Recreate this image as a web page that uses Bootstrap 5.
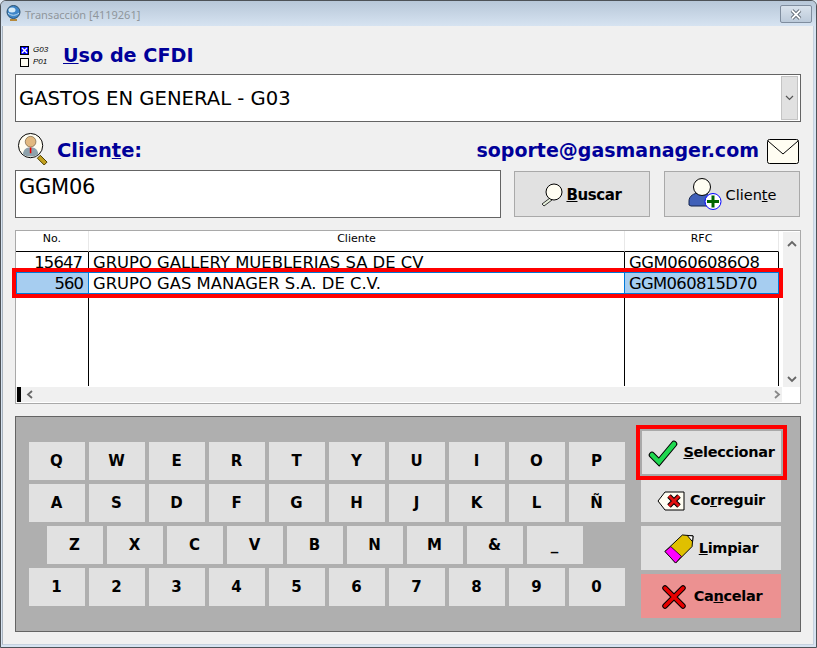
<!DOCTYPE html>
<html lang="es"><head><meta charset="utf-8"><title>Transacción</title>
<link href="https://cdn.jsdelivr.net/npm/bootstrap@5.3.0/dist/css/bootstrap.min.css" rel="stylesheet">
<style>
html,body{margin:0;height:648px;background:#dfe8f2;overflow:hidden}
body{font-family:"DejaVu Sans",sans-serif;color:#000}
.wnd{width:817px;height:648px;border:1px solid #4d5257;border-radius:6px 6px 0 0;background:#d6e3f1;display:flex;flex-direction:column;overflow:hidden}
.ttl{height:25px;flex:none;background:linear-gradient(#b7c7d8,#d6e3f1);padding-left:5px;color:#8f969c;font:11px/27px "Noto Sans",sans-serif}
.closex{width:32px;height:18px;margin:4px 4px 0 0;border:1px solid #7f8d9e;border-radius:2px;background:linear-gradient(#d9e2ec,#bccada)}
.bodyw{flex:1;margin:0 2px 2px 1px;background:#f0f0f0;padding:0 12px;border-left:1px solid #aab4bf;border-right:1px solid #c6d2df;border-bottom:1px solid #c6d2df}
.cfdirow{height:33px;margin-top:15px;align-items:flex-start}
.cfditop{width:43px;margin:3px 0 0 5px;font:italic 8px/12px "Liberation Sans",sans-serif}
.bluehd{font-weight:700;color:#000099;font-size:19px;line-height:24px}
.cfdihd{font-size:19.2px;margin-top:3px}
.clihd{font-size:19.5px;margin-bottom:2px}
.suphd{margin-bottom:3px}
.combo{height:48px;border:1px solid #646464;background:#fff;font-size:19.6px;padding:2px 2px 0 3px}
.combobtn{width:17px;height:44px;margin-top:-2px;background:#e1e1e1;border:1px solid #c4c4c4}
.clirow{height:48px;align-items:flex-end;padding-bottom:5px}
.cicon{margin:0 7px 0 2px}
.envi{margin-right:1px;margin-left:8px}
.inp{width:486px;height:48px;flex:none;border:1px solid #646464;border-radius:0;padding:0 3px 14px;font-size:21px;letter-spacing:-.25px;line-height:28px;color:#000;box-shadow:none}
.topbtn{width:136px;height:46px;margin-top:1px;background:#e1e1e1;border:1px solid #a9a9a9;border-radius:0;color:#000;font-size:14.5px;padding:0}
.bsc{margin-left:13px;font-size:15px;letter-spacing:-.4px;padding-right:3px}
.cli2{margin-left:14px}
.tlab{padding-top:3px}
.gridw{position:relative;margin-top:12px;height:174px;border:1px solid #a9a9a9;background:#fff}
.gridl{width:766px}
.gridtbl{width:763px;height:155px;table-layout:fixed;border-collapse:separate;border-spacing:0;margin:0;background:#fff}
.gridtbl>thead>tr>th{height:21px;padding:0;font:400 11px/15px "DejaVu Sans",sans-serif;vertical-align:top;text-align:center;border-bottom:1px solid #000;border-right:1px solid #e8e8e8;box-shadow:none;background:#fff;color:#000}
.gridtbl>tbody>tr>td{padding:2px 4px 0;font-size:16.4px;line-height:18px;border:0;border-right:1px solid #000;box-shadow:none;background:#fff;color:#000;white-space:nowrap;overflow:hidden;vertical-align:top}
.gridtbl>tbody>tr.r1>td{height:20px}
.gridtbl>tbody>tr.r2>td{height:22px;border-top:1px solid #0078d7;border-bottom:1px solid #0078d7;border-right-color:#0078d7}
.gridtbl>tbody>tr.r2>td.sel{background:#a6cdf0}
.gridtbl>tbody>tr.r2>td.first{border-left:1px solid #0078d7}
.gridtbl>tbody>tr>td.numc{text-align:right;padding-right:6px;letter-spacing:-.9px}
.gridtbl>tbody>tr.r2>td.numc{padding-right:5px}
.gridtbl>tbody>tr>td.rfcc{letter-spacing:-.45px}
.gridtbl>tbody>tr.r2>td.rfcc{letter-spacing:-.65px}
.hscroll{height:15px;margin-top:1px;background:#f0f0f0;padding-left:1px}
.hmark{width:4px;height:15px;background:#000}
.vscroll{width:17px;height:155px;margin:1px 0 0 1px;background:#f0f0f0}
.redband{position:absolute;left:-4px;top:37px;width:771px;height:30px;border:4px solid #f00;pointer-events:none}
.panel{margin-top:12px;height:216px;border:1px solid #646464;background:#afafaf;padding:12px 0 0 13px}
.keysw{margin-top:13px;gap:4px;width:597px}
.keyrow{gap:4px}
.keyrow.ind{padding-left:18px}
.kk{width:56px;height:38px;padding:0 1px 0 0;border:0;border-radius:0;background:#e1e1e1;color:#000;font-weight:700;font-size:15px;line-height:38px}
.acts{width:143px;margin-left:15px;gap:4px}
.act{height:44px;width:140px;padding:0;border:0;border-radius:0;background:#e1e1e1;color:#000;font-weight:700;font-size:14.5px;letter-spacing:-.3px;gap:5px}
.act:hover,.kk:hover,.topbtn:hover{background:#e1e1e1;color:#000}
.act.selb{width:143px;height:47px;margin-left:-1px;border:2px solid #a9a9a9;outline:4px solid #f00}
.act.corb{height:42px}
.act.limb{padding-top:1px}
.act.canb,.act.canb:hover{background:#ec9191;gap:8px;padding:1px 0 0 2px}
</style></head><body>
<div class="wnd">
 <div class="ttl d-flex align-items-start">
  <svg width="15" height="17" viewBox="0 0 15 17" class="me-1 mt-1 flex-none"><ellipse cx="7.5" cy="7" rx="6.5" ry="6.5" fill="#3f86c8" stroke="#29516f"/><ellipse cx="6" cy="5" rx="3.5" ry="2.5" fill="#d5ebf8"/><path d="M2 8c3 3 8 3 11 0" fill="none" stroke="#bfe0f5"/><path d="M4 15h7" stroke="#b68a3c" stroke-width="2"/></svg>
  <span class="flex-grow-1">Transacción [4119261]</span>
  <div class="closex d-flex align-items-center justify-content-center"><svg width="14" height="11" viewBox="0 0 14 11"><path d="M3 1.5l8 8M11 1.5l-8 8" stroke="#4c5560" stroke-width="3.6"/><path d="M3 1.5l8 8M11 1.5l-8 8" stroke="#fff" stroke-width="1.8"/></svg></div>
 </div>
 <div class="bodyw">
  <div class="cfdirow d-flex">
   <div class="cfditop">
    <div class="d-flex align-items-center gap-1"><svg width="9" height="9" viewBox="0 0 9 9"><rect x=".5" y=".5" width="8" height="8" fill="#00f" stroke="#000"/><path d="M2 2l5 5M7 2l-5 5" stroke="#fff" stroke-width="1.4"/></svg><span>G03</span></div>
    <div class="d-flex align-items-center gap-1"><svg width="9" height="9" viewBox="0 0 9 9"><rect x=".5" y=".5" width="8" height="8" fill="#fffdf2" stroke="#000"/></svg><span>P01</span></div>
   </div>
   <div class="bluehd cfdihd"><u>U</u>so de CFDI</div>
  </div>
  <div class="combo d-flex align-items-center"><span class="flex-grow-1">GASTOS EN GENERAL - G03</span>
   <div class="combobtn d-flex align-items-center justify-content-center"><svg width="9" height="6" viewBox="0 0 9 6"><path d="M1 1l3.5 3.5L8 1" fill="none" stroke="#555" stroke-width="1.2"/></svg></div></div>
  <div class="clirow d-flex">
   <svg width="33" height="33" viewBox="0 0 34 34" class="cicon"><path d="M24 24l7 7-3 3-7-7z" fill="#c2a01e" stroke="#4a3c00"/><circle cx="14" cy="14" r="12.5" fill="#fffdf2" stroke="#000"/><path d="M6 23c1-6 4-7 8-7s7 1 8 7c-4 3-12 3-16 0z" fill="#8ea2ac"/><circle cx="14" cy="10" r="5.5" fill="#e2b980" stroke="#5c4a2e" stroke-width=".6"/><path d="M14 16v6" stroke="#e00" stroke-width="1.6"/></svg>
   <div class="bluehd clihd flex-grow-1">Clien<u>t</u>e:</div>
   <div class="bluehd suphd">soporte@gasmanager.com</div>
   <svg width="33" height="26" viewBox="0 0 33 26" class="envi"><rect x=".5" y=".5" width="31" height="24" rx="2" fill="#fffdf2" stroke="#000"/><path d="M1 2l15 13L31 2" fill="none" stroke="#000"/></svg>
  </div>
  <div class="d-flex">
   <input class="form-control inp" value="GGM06">
   <button class="btn topbtn bsc d-flex align-items-center justify-content-center fw-bold">
    <svg width="27" height="26" viewBox="0 -2 27 26"><path d="M11 15L3 21l2 2 8-6z" fill="#e6f0dc" stroke="#333"/><circle cx="15" cy="9" r="8" fill="#fffdf2" stroke="#000"/></svg><span class="tlab"><u>B</u>uscar</span></button>
   <button class="btn topbtn cli2 d-flex align-items-center justify-content-center gap-1">
    <svg width="34" height="32" viewBox="0 0 34 32"><path d="M1 27v-4c0-5 5-8 10-8h4c5 0 7 3 7 8v5H3z" fill="#4060b8" stroke="#14244e"/><circle cx="14" cy="9" r="8.5" fill="#fffdf2" stroke="#000"/><circle cx="25" cy="23.500" r="8" fill="#fff" stroke="#00f"/><path d="M25 17.500v12M19 23.500h12" stroke="#006400" stroke-width="3"/></svg><span class="tlab">Clien<u>t</u>e</span></button>
  </div>
  <div class="gridw d-flex">
   <div class="gridl">
    <table class="table gridtbl">
     <colgroup><col style="width:73px"><col style="width:536px"><col style="width:154px"></colgroup>
     <thead><tr><th>No.</th><th>Cliente</th><th>RFC</th></tr></thead>
     <tbody>
      <tr class="r1"><td class="numc">15647</td><td>GRUPO GALLERY MUEBLERIAS SA DE CV</td><td class="rfcc">GGM0606086O8</td></tr>
      <tr class="r2"><td class="numc sel first">560</td><td>GRUPO GAS MANAGER S.A. DE C.V.</td><td class="sel rfcc">GGM060815D70</td></tr>
      <tr><td></td><td></td><td></td></tr>
     </tbody>
    </table>
    <div class="hscroll d-flex align-items-center"><div class="hmark"></div>
     <svg width="10" height="9" viewBox="0 0 10 9" class="ms-1 flex-none"><path d="M7 1L3 4.500l4 3.500" fill="none" stroke="#666" stroke-width="1.800"/></svg>
     <svg width="10" height="9" viewBox="0 0 10 9" class="ms-auto"><path d="M3 1l4 3.500L3 8" fill="none" stroke="#888" stroke-width="1.800"/></svg></div>
   </div>
   <div class="vscroll d-flex flex-column align-items-center justify-content-between pt-2 pb-1">
    <svg width="10" height="7" viewBox="0 0 10 7"><path d="M1 6l4-4 4 4" fill="none" stroke="#666" stroke-width="1.800"/></svg>
    <svg width="10" height="7" viewBox="0 0 10 7"><path d="M1 1l4 4 4-4" fill="none" stroke="#666" stroke-width="1.800"/></svg>
   </div>
   <div class="redband"></div>
  </div>
  <div class="panel d-flex">
   <div class="keysw d-flex flex-column">
    <div class="keyrow d-flex"><button class="btn kk">Q</button><button class="btn kk">W</button><button class="btn kk">E</button><button class="btn kk">R</button><button class="btn kk">T</button><button class="btn kk">Y</button><button class="btn kk">U</button><button class="btn kk">I</button><button class="btn kk">O</button><button class="btn kk">P</button></div>
    <div class="keyrow d-flex"><button class="btn kk">A</button><button class="btn kk">S</button><button class="btn kk">D</button><button class="btn kk">F</button><button class="btn kk">G</button><button class="btn kk">H</button><button class="btn kk">J</button><button class="btn kk">K</button><button class="btn kk">L</button><button class="btn kk">Ñ</button></div>
    <div class="keyrow ind d-flex"><button class="btn kk">Z</button><button class="btn kk">X</button><button class="btn kk">C</button><button class="btn kk">V</button><button class="btn kk">B</button><button class="btn kk">N</button><button class="btn kk">M</button><button class="btn kk">&amp;</button><button class="btn kk">_</button></div>
    <div class="keyrow d-flex"><button class="btn kk">1</button><button class="btn kk">2</button><button class="btn kk">3</button><button class="btn kk">4</button><button class="btn kk">5</button><button class="btn kk">6</button><button class="btn kk">7</button><button class="btn kk">8</button><button class="btn kk">9</button><button class="btn kk">0</button></div>
   </div>
   <div class="acts d-flex flex-column">
    <button class="btn act selb d-flex align-items-center justify-content-center">
     <svg width="30" height="28" viewBox="0 0 30 28"><path d="M4 16l7 7L26 5" fill="none" stroke="#000" stroke-width="6.500" stroke-linecap="round"/><path d="M4 16l7 7L26 5" fill="none" stroke="#20d850" stroke-width="4.500" stroke-linecap="round"/></svg><span><u>S</u>eleccionar</span></button>
    <button class="btn act corb d-flex align-items-center justify-content-center">
     <svg width="28" height="20" viewBox="0 0 28 20"><path d="M1 10L8 1h19v18H8z" fill="#fffdf2" stroke="#000"/><path d="M12 5l10 10M22 5L12 15" stroke="#000" stroke-width="5"/><path d="M12 5l10 10M22 5L12 15" stroke="#e01010" stroke-width="3"/></svg><span>Co<u>r</u>reguir</span></button>
    <button class="btn act limb d-flex align-items-center justify-content-center">
     <svg width="30" height="30" viewBox="0 0 31 31"><path d="M1 18L19 1l11 1-1 11L12 30z" fill="#e0c000" stroke="#000"/><path d="M24 1.500l6 .5-.5 6z" fill="#fff" stroke="#000"/><path d="M1 18l6-5 11 10-6 7z" fill="#f0f" stroke="#000" stroke-width=".8"/></svg><span><u>L</u>impiar</span></button>
    <button class="btn act canb d-flex align-items-center justify-content-center">
     <svg width="24" height="24" viewBox="0 0 24 24"><path d="M3 3l18 18M21 3L3 21" stroke="#000" stroke-width="5.500" stroke-linecap="round"/><path d="M3 3l18 18M21 3L3 21" stroke="#e80000" stroke-width="3.500" stroke-linecap="round"/></svg><span>Ca<u>n</u>celar</span></button>
   </div>
  </div>
 </div>
</div>
<script src="https://cdn.jsdelivr.net/npm/bootstrap@5.3.0/dist/js/bootstrap.bundle.min.js"></script>
</body></html>
